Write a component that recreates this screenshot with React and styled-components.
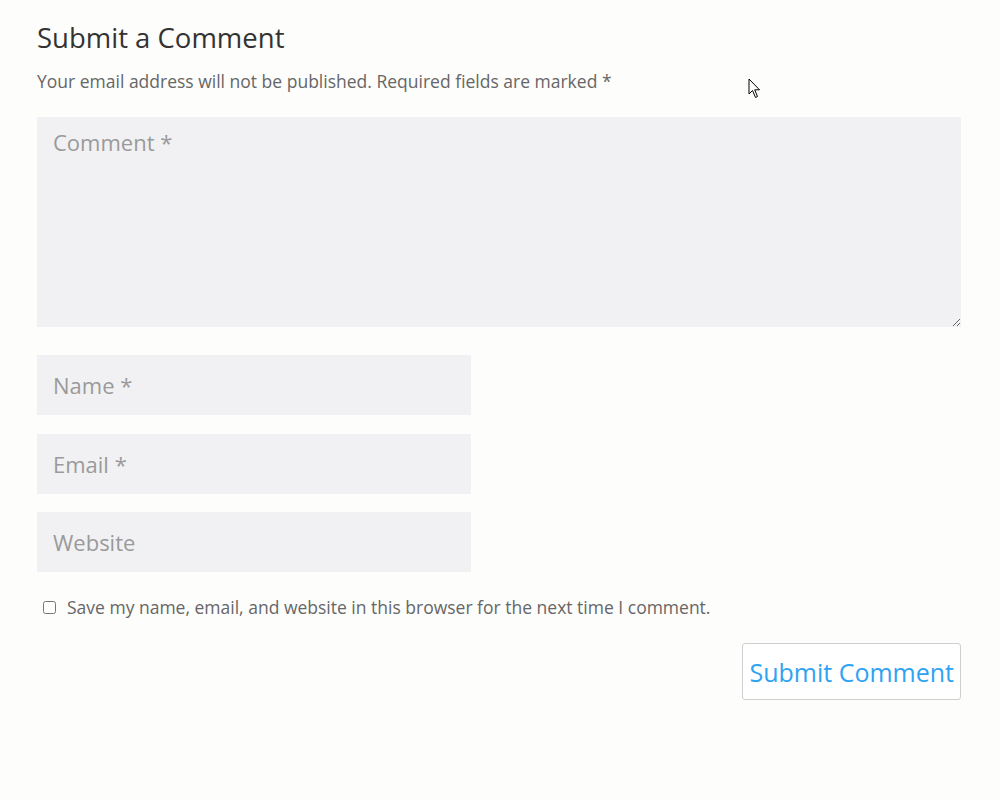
import React from "react";
import styled, { createGlobalStyle } from "styled-components";

const Global = createGlobalStyle`
  html, body { margin: 0; padding: 0; background: #fdfdfc; }
  body { font-family: "Open Sans", "Noto Sans", sans-serif; color: #666; }
  * { box-sizing: border-box; }
`;

const Page = styled.div`
  position: relative;
  width: 1000px;
  height: 800px;
  padding: 18px 39px 0 37px;
`;

const Title = styled.h3`
  margin: 0;
  font-size: 27.5px;
  font-weight: 400;
  line-height: 40px;
  color: #333;
`;

const Note = styled.p`
  margin: 10px 0 0 0;
  font-size: 17.5px;
  line-height: 26px;
  color: #666;
`;

const Form = styled.form`
  display: flex;
  flex-direction: column;
  margin-top: 23px;
`;

const Field = styled.input`
  display: block;
  width: 434px;
  height: 60px;
  border: none;
  outline: none;
  background: #f1f1f3;
  padding: 0 16px;
  font-family: inherit;
  font-size: 22px;
  color: #999;
  margin-top: ${(p) => p.$mt || "0"};
  &::placeholder { color: #9a9a9a; }
`;

const Area = styled.textarea`
  display: block;
  width: 924px;
  height: 210px;
  border: none;
  outline: none;
  background: #f1f1f3;
  padding: 10px 16px;
  font-family: inherit;
  font-size: 22px;
  resize: vertical;
  &::placeholder { color: #9a9a9a; }
`;

const CheckRow = styled.label`
  display: flex;
  align-items: center;
  gap: 11px;
  margin-top: 23px;
  margin-left: 6px;
  font-size: 17.5px;
  color: #666;
`;

const Box = styled.input`
  margin: 0;
  width: 13px;
  height: 13px;
`;

const Actions = styled.div`
  display: flex;
  justify-content: flex-end;
  margin-top: 24px;
`;

const Button = styled.button`
  height: 57px;
  padding: 0 6px;
  background: #fff;
  border: 1px solid #cfcfcf;
  border-radius: 3px;
  font-family: inherit;
  font-size: 25px;
  color: #2ea3f2;
  cursor: pointer;
`;

const Cursor = styled.svg`
  position: absolute;
  left: 748px;
  top: 78px;
`;

export default function App() {
  return (
    <Page>
      <Global />
      <Title>Submit a Comment</Title>
      <Note>Your email address will not be published. Required fields are marked *</Note>
      <Form onSubmit={(e) => e.preventDefault()}>
        <Area placeholder="Comment *" />
        <Field $mt="28px" placeholder="Name *" />
        <Field $mt="19px" placeholder="Email *" />
        <Field $mt="18px" placeholder="Website" />
        <CheckRow>
          <Box type="checkbox" />
          Save my name, email, and website in this browser for the next time I comment.
        </CheckRow>
        <Actions>
          <Button type="submit">Submit Comment</Button>
        </Actions>
      </Form>
      <Cursor width="14" height="22" viewBox="0 0 14 22">
        <path d="M1 1 L1 16 L4.5 12.5 L7.5 19.5 L9.5 18.5 L6.7 11.8 L11.5 11.8 Z" fill="#fff" stroke="#000" strokeWidth="1" strokeLinejoin="miter" />
      </Cursor>
    </Page>
  );
}
